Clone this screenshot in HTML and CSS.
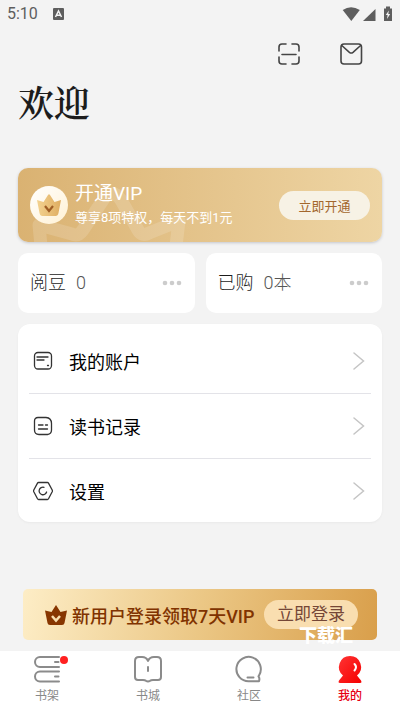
FILE: index.html
```html
<!DOCTYPE html>
<html lang="zh-CN">
<head>
<meta charset="utf-8">
<meta name="viewport" content="width=device-width, initial-scale=1">
<title>我的</title>
<link rel="stylesheet" href="styles.css">
</head>
<body>
<div class="app">
  <div class="status">
    <span class="time">5:10</span>
    <svg width="11" height="12" viewBox="0 0 11 12"><rect width="11" height="12" rx="1" fill="#5e5e5e"/><path d="M2.5 9 5.5 3l3 6M3.7 7.2h3.6" fill="none" stroke="#f3f3f3" stroke-width="1.5"/></svg>
    <svg class="signals" width="52" height="16" viewBox="0 0 52 16" fill="#5e5e5e"><path d="M.7 4.100Q9 -1.600 17.800 4.100L9.300 15Z"/><path d="M33.500 3v12H21Z"/><path d="M42 2.500h2V.5h4v2h2V15h-8Z"/><path d="M46.800 4.500 43.800 9h1.800l-.6 4 3.200-5h-1.900Z" fill="#f3f3f3"/></svg>
  </div>
  <header class="tools">
    <button class="tool" aria-label="扫一扫"><svg width="24" height="24" viewBox="0 0 24 24"><path d="M2 9V5a3 3 0 0 1 3-3h4M15 2h4a3 3 0 0 1 3 3v4M22 15v4a3 3 0 0 1-3 3h-4M9 22H5a3 3 0 0 1-3-3v-4M5 12.500h14"/></svg></button>
    <button class="tool" aria-label="消息"><svg width="24" height="24" viewBox="0 0 24 24"><rect x="2" y="2" width="20.500" height="20" rx="3"/><path d="m2.800 3.500 7.600 6.800q1.800 1.400 3.600 0l7.600-6.800"/></svg></button>
  </header>
  <h1 class="title">欢迎</h1>

  <main class="content">
    <section class="vip">
      <svg class="watermark-crown" width="170" height="58" viewBox="0 0 170 58"><path d="M11 62 9 41 42 50 Q48 53 53 46L73 16Q82 3 91 16L108 46Q112 53 119 49L149 37 146 62" fill="none" stroke="#fff" stroke-opacity=".15" stroke-width="13" stroke-linejoin="round"/></svg>
      <svg class="medal" width="38" height="38" viewBox="0 0 38 38">
        <defs><linearGradient id="medal" x2="1" y2="1"><stop stop-color="#fff"/><stop offset="1" stop-color="#fff1d4"/></linearGradient><linearGradient id="crown" x2="1"><stop stop-color="#f3d290"/><stop offset="1" stop-color="#dfad61"/></linearGradient></defs>
        <circle cx="19" cy="19" r="19" fill="url(#medal)"/>
        <path d="m7 14 6.500 2 4.500-7q1-1.600 2 0l4.500 7 6.500-2-2.500 13q-.5 3-3 3h-13q-2.500 0-3-3Z" fill="url(#crown)"/>
        <path d="m15 20 4 5 4-5" fill="none" stroke="#a05e25" stroke-width="2.200"/>
      </svg>
      <div class="vip-text">
        <h2>开通VIP</h2>
        <p>尊享8项特权，每天不到1元</p>
      </div>
      <button class="vip-button">立即开通</button>
    </section>

    <section class="stats">
      <a class="stat" href="#"><span>阅豆</span><span class="value">0</span><svg width="20" height="6" viewBox="0 0 20 6"><g fill="#ccc"><circle cx="3" cy="3" r="2.300"/><circle cx="10" cy="3" r="2.300"/><circle cx="17" cy="3" r="2.300"/></g></svg></a>
      <a class="stat" href="#"><span>已购</span><span class="value">0本</span><svg width="20" height="6" viewBox="0 0 20 6"><g fill="#ccc"><circle cx="3" cy="3" r="2.300"/><circle cx="10" cy="3" r="2.300"/><circle cx="17" cy="3" r="2.300"/></g></svg></a>
    </section>

    <nav class="menu" aria-label="设置菜单">
      <a class="row" href="#"><svg class="icon" width="20" height="20" viewBox="0 0 20 20"><rect x="1.500" y="1.500" width="17" height="16.500" rx="3.500"/><path d="M4 6h11M4 9h7M14.500 14.500h1"/></svg><span>我的账户</span><svg class="chevron" width="12" height="18" viewBox="0 0 12 18"><path d="m1 1 9.500 8L1 17"/></svg></a>
      <a class="row" href="#"><svg class="icon" width="20" height="20" viewBox="0 0 20 20"><path d="M5 1.500h8q5.500.5 5.500 6V14q0 4-4 4.500H6q-4.500 0-4.500-4.500V5q0-3.500 3.500-3.500ZM5.500 9h4.500M12.500 9h2M5.500 13h9"/></svg><span>读书记录</span><svg class="chevron" width="12" height="18" viewBox="0 0 12 18"><path d="m1 1 9.500 8L1 17"/></svg></a>
      <a class="row" href="#"><svg class="icon" width="20" height="20" viewBox="0 0 20 20"><path d="M5.500 1.500h9q.6 0 1 .6L19.200 9q.4.900 0 1.800l-3.700 7q-.4.700-1 .7h-9q-.6 0-1-.7L.8 10.800q-.4-.9 0-1.800l3.700-6.900q.4-.6 1-.6ZM11 6.300a3.800 3.800 0 1 0 2.600 4.700"/></svg><span>设置</span><svg class="chevron" width="12" height="18" viewBox="0 0 12 18"><path d="m1 1 9.500 8L1 17"/></svg></a>
    </nav>
  </main>

  <section class="banner">
    <svg width="24" height="22" viewBox="0 0 24 22"><path d="M1 6.500 7.500 8 12 1l4.500 7L23 6.500l-2.500 12.500q-.3 2-2.500 2H6q-2.200 0-2.500-2Z" fill="#873600"/><path d="m8 12 4 4.500 4-4.500" fill="none" stroke="#f9dfae" stroke-width="2.500"/></svg>
    <strong>新用户登录领取7天VIP</strong>
    <button class="login">立即登录</button>
    <span class="site-mark">下载汇</span>
  </section>

  <nav class="tabs" aria-label="主导航">
    <a class="tab" href="#"><svg width="28" height="28" viewBox="0 0 28 28"><path d="M26 2H7a5 5 0 0 0 0 10h19M22 7h3.500M26 16.500H7a5 5 0 0 0 0 10h19M22 21.500h3.500"/></svg><span>书架</span><i class="dot"></i></a>
    <a class="tab" href="#"><svg width="28" height="28" viewBox="0 0 28 28"><path d="M14 6q-1.500-4-6-4H5Q1 2 1 6v16q0 3 3 3h5q2 0 3 .8 2 1.200 4 0 1-.8 3-.8h5q3 0 3-3V6q0-4-4-4h-3q-4.500 0-6 4ZM14 12v4"/></svg><span>书城</span></a>
    <a class="tab" href="#"><svg width="28" height="28" viewBox="0 0 28 28"><path d="M24 20.500A12.200 12.200 0 1 0 14 26.300h10q1-3-.5-5M12.500 22.500h6"/></svg><span>社区</span></a>
    <a class="tab active" href="#" aria-current="page"><svg width="28" height="28" viewBox="0 0 28 28"><defs><linearGradient id="person" x2="1" y2="1"><stop stop-color="#ff3434"/><stop offset="1" stop-color="#f50000"/></linearGradient></defs><path class="person" fill="url(#person)" d="M14 1a11 11 0 0 1 7 19.500l4 5q1.200 2.500-1 2.500H4q-2.200 0-1-2.500l4-5A11 11 0 0 1 14 1Z"/><path class="smile" d="M18.500 9q3 3 0 6.500"/></svg><span>我的</span></a>
  </nav>
</div>
</body>
</html>
```
FILE: styles.css
```css
* { box-sizing: border-box; }

body {
  margin: 0;
  background: #f3f3f3;
  color: #1c1c1c;
  font-family: Roboto, "Noto Sans CJK SC", sans-serif;
}

a { color: inherit; text-decoration: none; }
button { border: 0; padding: 0; font: inherit; cursor: pointer; }
h1, h2, p { margin: 0; font-weight: 400; }
svg { flex: none; display: block; }

.app {
  min-height: 100vh;
  display: flex;
  flex-direction: column;
}

.status {
  display: flex;
  align-items: center;
  gap: 15px;
  height: 28px;
  padding: 0 6px 0 7px;
  color: #5e5e5e;
  font-size: 16px;
  line-height: 28px;
}
.signals { margin-left: auto; }

.tools {
  display: flex;
  justify-content: flex-end;
  gap: 38px;
  padding: 14px 37px 0;
}
.tool { background: none; }
.tool svg {
  fill: none;
  stroke: #444;
  stroke-width: 1.6;
  stroke-linecap: round;
}

.title {
  padding: 12px 18px 0;
  font: 600 36px/48px "Noto Serif CJK SC", "Noto Sans CJK SC", serif;
}

.content {
  display: flex;
  flex-direction: column;
  gap: 11px;
  padding: 42px 18px 20px;
}

.vip {
  position: relative;
  display: flex;
  align-items: center;
  gap: 7px;
  height: 74px;
  padding: 0 12px;
  border-radius: 10px;
  overflow: hidden;
  color: #fff;
  background: linear-gradient(90deg, #dab272, #eed5a4);
  box-shadow: 0 1px 3px #c4c6cc;
}
.watermark-crown { position: absolute; left: 12px; bottom: 0; }
.medal, .vip-text, .vip-button { position: relative; }
.vip-text { flex: 1; }
.vip-text h2 { font-size: 19px; line-height: 26px; }
.vip-text p { font-size: 13px; line-height: 22px; white-space: nowrap; }
.vip-button {
  width: 91px;
  height: 29px;
  border-radius: 15px;
  background: #f7f2e5;
  color: #a3672d;
  font-size: 13px;
}

.stats {
  display: grid;
  grid-template-columns: 1fr 1fr;
  gap: 11px;
}
.stat {
  display: flex;
  align-items: center;
  gap: 10px;
  height: 60px;
  padding: 0 13px 0 12px;
  border-radius: 10px;
  background: #fff;
  font-size: 18px;
  line-height: 26px;
  font-weight: 300;
}
.stat .value { color: #555; }
.stat svg { margin-left: auto; }

.menu {
  padding: 5px 11px 0;
  border-radius: 12px;
  background: #fff;
  box-shadow: 0 1px 2px #e9e9e9;
}
.row {
  display: flex;
  align-items: center;
  height: 65px;
  gap: 16px;
  padding: 0 6px 0 4px;
  border-bottom: 1px solid #e3e3e8;
  font-size: 18px;
  color: #000;
}
.row:last-child { height: 63px; border-bottom: 0; }
.icon, .chevron { fill: none; stroke-linecap: round; }
.icon { stroke: #333; stroke-width: 1.3; }
.chevron { margin-left: auto; stroke: #c5c5c5; stroke-width: 1.5; }

.banner {
  position: relative;
  display: flex;
  align-items: center;
  gap: 4px;
  height: 51px;
  margin: auto 23px 11px;
  padding: 0 19px 0 21px;
  border-radius: 5px;
  background: linear-gradient(100deg, #fdedc6, #ebc785 50%, #d99f4b);
  color: #803300;
}
.banner strong {
  flex: 1;
  font-size: 18px;
  font-weight: 500;
  white-space: nowrap;
}
.login {
  width: 94px;
  height: 29px;
  border-radius: 15px;
  background: #f9deb0;
  color: #754737;
  font-size: 17px;
  line-height: 29px;
}
.site-mark {
  position: absolute;
  right: 24px;
  bottom: -8px;
  color: #fff;
  font-size: 18px;
  font-weight: 900;
  line-height: 24px;
}

.tabs {
  display: flex;
  justify-content: space-between;
  height: 59px;
  padding: 4px 20px 0 17px;
  background: #fff;
}
.tab {
  position: relative;
  display: flex;
  flex-direction: column;
  align-items: center;
  gap: 4px;
  width: 60px;
  color: #888;
  font-size: 12px;
  line-height: 18px;
}
.tab svg {
  fill: none;
  stroke: #8b8b8b;
  stroke-width: 2;
  stroke-linecap: round;
  stroke-linejoin: round;
}
.tab.active { color: #e60012; font-weight: 500; }
.tab .person { stroke: none; }
.tab .smile { stroke: #fff; }
.dot {
  position: absolute;
  top: 1px;
  right: 9px;
  width: 8px;
  height: 8px;
  border-radius: 50%;
  background: #ff2020;
}
```
